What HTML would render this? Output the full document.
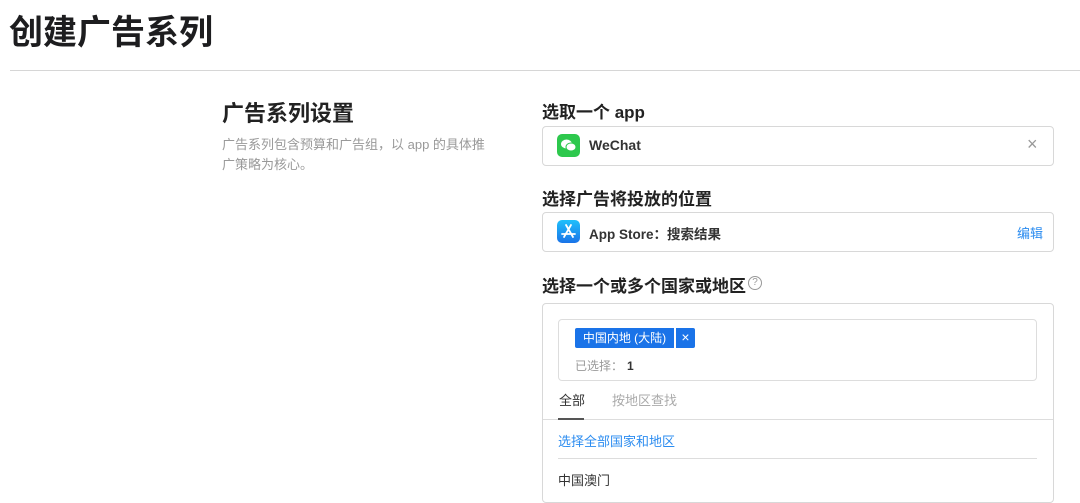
<!DOCTYPE html>
<html><head><meta charset="utf-8"><style>
*{margin:0;padding:0;box-sizing:border-box}
body{width:1080px;height:495px;overflow:hidden;background:#fff;font-family:"Liberation Sans","Noto Sans CJK SC",sans-serif;color:#1d1d1f;position:relative}
.a{position:absolute;white-space:nowrap}
.box{position:absolute;border:1px solid #d8d8d8;border-radius:4px;background:#fff}
h1{position:absolute;left:9px;top:5px;font-size:34px;font-weight:700}
.h{font-size:17px;font-weight:700;color:#222}
</style></head><body>
<h1>创建广告系列</h1>
<div class="a" style="left:10px;top:70px;width:1070px;height:1px;background:#d6d6d6"></div>
<div class="a" style="left:222px;top:96px;font-size:22px;font-weight:700;color:#222">广告系列设置</div>
<div class="a" style="left:222px;top:135px;font-size:13px;color:#999;line-height:20px;white-space:normal;width:270px">广告系列包含预算和广告组，以 app 的具体推广策略为核心。</div>

<div class="a h" style="left:542px;top:98px">选取一个 app</div>
<div class="box" style="left:542px;top:126px;width:512px;height:40px"></div>
<div class="a" style="left:557px;top:134px;width:23px;height:23px;border-radius:5px;background:#2dc84d">
<svg width="23" height="23" viewBox="0 0 23 23"><ellipse cx="9.5" cy="10" rx="5.5" ry="4.5" fill="#fff"/><ellipse cx="14" cy="13" rx="5" ry="4" fill="#fff" stroke="#2dc84d" stroke-width="1"/></svg></div>
<div class="a" style="left:589px;top:137px;font-size:14px;font-weight:700;color:#333">WeChat</div>
<div class="a" style="left:1027px;top:134px;font-size:18px;color:#999">×</div>

<div class="a h" style="left:542px;top:185px">选择广告将投放的位置</div>
<div class="box" style="left:542px;top:212px;width:512px;height:40px"></div>
<div class="a" style="left:557px;top:220px;width:23px;height:23px;border-radius:5px;background:linear-gradient(#1fc0fb,#1a73e8)">
<svg width="23" height="23" viewBox="0 0 23 23" fill="none" stroke="#fff" stroke-width="1.8" stroke-linecap="round"><path d="M9 5l7 12M14 5L7 17M5 14h13"/></svg></div>
<div class="a" style="left:589px;top:223px;font-size:13.5px;font-weight:700;color:#333">App Store：搜索结果</div>
<div class="a" style="left:1017px;top:223px;font-size:13px;color:#2b8cf0">编辑</div>

<div class="a h" style="left:542px;top:272px">选择一个或多个国家或地区</div>
<div class="a" style="left:748px;top:276px;width:14px;height:14px;border:1px solid #999;border-radius:50%;font-size:10px;color:#999;text-align:center;line-height:12px">?</div>
<div class="box" style="left:542px;top:303px;width:512px;height:200px"></div>
<div class="box" style="left:558px;top:319px;width:479px;height:62px;border-color:#ddd"></div>
<div class="a" style="left:575px;top:328px;width:99px;height:20px;background:#1a73e8;border-radius:2px 0 0 2px;color:#fff;font-size:12px;line-height:20px;text-align:center">中国内地 (大陆)</div>
<div class="a" style="left:676px;top:328px;width:19px;height:20px;background:#1a73e8;border-radius:0 2px 2px 0;color:#fff;font-size:14px;line-height:19px;text-align:center">×</div>
<div class="a" style="left:575px;top:357px;font-size:12px;color:#999">已选择：<b style="color:#333;margin-left:4px">1</b></div>
<div class="a" style="left:559px;top:390px;font-size:13px;color:#333">全部</div>
<div class="a" style="left:612px;top:390px;font-size:13px;color:#aaa">按地区查找</div>
<div class="a" style="left:543px;top:419px;width:510px;height:1px;background:#ddd"></div>
<div class="a" style="left:558px;top:418px;width:26px;height:2px;background:#555"></div>
<div class="a" style="left:558px;top:431px;font-size:13px;color:#2b8cf0">选择全部国家和地区</div>
<div class="a" style="left:558px;top:458px;width:479px;height:1px;background:#ddd"></div>
<div class="a" style="left:558px;top:470px;font-size:13px;color:#333">中国澳门</div>
</body></html>
